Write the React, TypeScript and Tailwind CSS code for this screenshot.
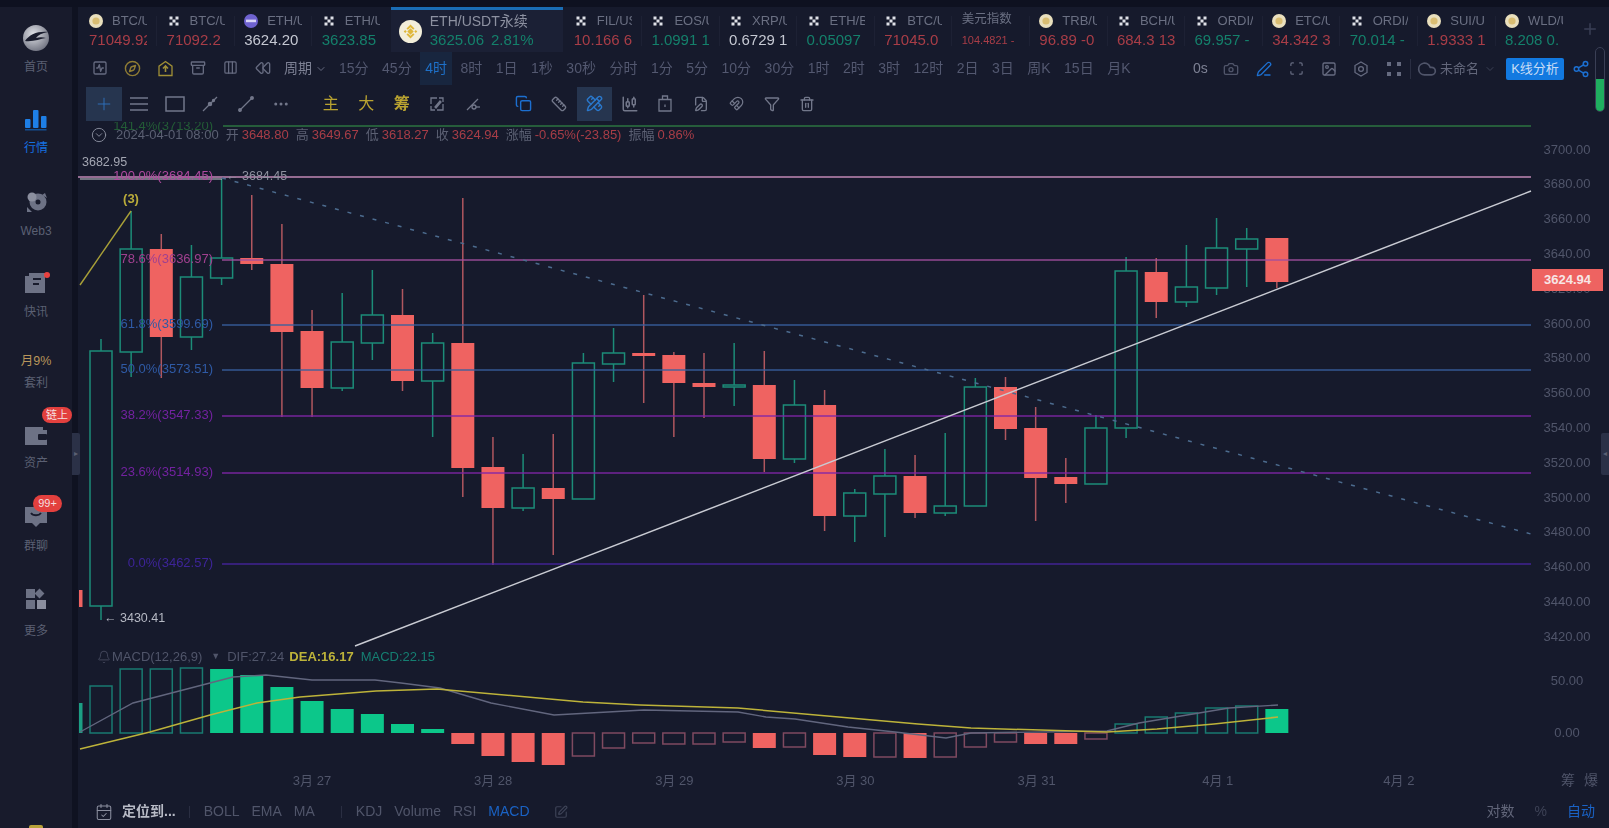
import {
  Archive,
  Camera,
  CandlestickChart,
  ChevronDown,
  CircleChevronDown,
  Cloud,
  Compass,
  Copy,
  Ellipsis,
  FilePen,
  Funnel,
  Magnet,
  PenLine,
  Ruler,
  Share2,
  SquareActivity,
  SquarePen,
  Trash2,
  Bell,
  CalendarCheck,
  Plus,
  Rewind,
  Columns3,
  Scan,
  Image,
  PencilRuler,
} from "lucide-react";

const RED = "#a83d47";
const GREEN = "#14806b";

// x = 101 + 30.15 * i, values are page y pixels: high, top, bottom, low
const candles: [number, number, number, number, "g" | "r"][] = [
  [339, 351, 606, 620, "g"],
  [211, 249, 352, 377, "g"],
  [234, 249, 337, 378, "r"],
  [245, 277, 337, 350, "g"],
  [179, 258, 278, 285, "g"],
  [195, 258, 264, 270, "r"],
  [224, 264, 332, 417, "r"],
  [310, 331, 388, 417, "r"],
  [293, 342, 388, 391, "g"],
  [270, 315, 343, 360, "g"],
  [289, 315, 381, 391, "r"],
  [333, 343, 381, 437, "g"],
  [198, 343, 468, 497, "r"],
  [437, 467, 508, 565, "r"],
  [454, 488, 508, 511, "g"],
  [434, 488, 499, 555, "r"],
  [353, 363, 499, 499, "g"],
  [328, 353, 364, 382, "g"],
  [295, 353, 356, 403, "r"],
  [352, 355, 383, 437, "r"],
  [353, 383, 387, 418, "r"],
  [343, 385, 387, 406, "g"],
  [351, 385, 459, 472, "r"],
  [380, 405, 459, 463, "g"],
  [390, 405, 516, 531, "r"],
  [489, 493, 516, 542, "g"],
  [449, 476, 494, 537, "g"],
  [455, 476, 513, 518, "r"],
  [433, 506, 513, 516, "g"],
  [378, 387, 506, 506, "g"],
  [377, 387, 429, 440, "r"],
  [407, 428, 478, 521, "r"],
  [458, 477, 484, 503, "r"],
  [415, 428, 484, 484, "g"],
  [257, 271, 428, 438, "g"],
  [258, 272, 302, 318, "r"],
  [245, 287, 302, 307, "g"],
  [218, 248, 288, 295, "g"],
  [228, 239, 249, 287, "g"],
  [238, 238, 282, 288, "r"],
];

// far end of each MACD bar from the zero line, and whether it is solid
const macd: [number, boolean][] = [
  [686, false], [669, false], [669, false], [668, false], [669, true], [675, true], [687, true],
  [701, true], [709, true], [714, true], [724, true], [729, true],
  [744, true], [756, true], [762, true], [765, true], [756, false], [748, false], [743, false],
  [744, false], [744, false], [742, false], [748, true], [747, false], [755, true], [757, true],
  [757, false], [758, true], [757, false], [747, false], [742, false], [744, true], [744, true],
  [739, false], [724, false], [717, false], [713, false], [708, false], [706, false], [709, true],
];

const fibs = [
  { label: "78.6%(3636.97)", y: 260, c: "#a24f9f", tc: "#a0408f" },
  { label: "61.8%(3599.69)", y: 325, c: "#38609f", tc: "#2f5aa5" },
  { label: "50.0%(3573.51)", y: 370, c: "#38609f", tc: "#2f5aa5" },
  { label: "38.2%(3547.33)", y: 416, c: "#8026a8", tc: "#7322a0" },
  { label: "23.6%(3514.93)", y: 473, c: "#8026a8", tc: "#7322a0" },
  { label: "0.0%(3462.57)", y: 564, c: "#47259f", tc: "#3d2498" },
];

const difLine =
  "80,732 133,703 210,683 233,677 266,675 312,680 375,680 401,683 440,688 491,703 554,715 644,710 738,712 766,717 795,719 848,727 895,732 946,738 971,733 1107,731 1139,723 1175,717 1229,708 1278,705";
const deaLine =
  "80,749 150,732 210,715 257,703 300,697 376,691 437,689 583,702 640,705 738,708 918,724 971,728 1107,732 1157,729 1214,724 1278,717";

const axisPrices = ["3700.00", "3680.00", "3660.00", "3640.00", "3620.00", "3600.00", "3580.00", "3560.00", "3540.00", "3520.00", "3500.00", "3480.00", "3460.00", "3440.00", "3420.00"];

const framesLeft = ["15分", "45分", "4时", "8时", "1日", "1秒", "30秒", "分时", "1分", "5分", "10分", "30分", "1时", "2时", "3时", "12时", "2日", "3日", "周K", "15日", "月K"];
const dates = ["3月 27", "3月 28", "3月 29", "3月 30", "3月 31", "4月 1", "4月 2"];

function OkxIcon() {
  return (
    <svg width="14" height="14" viewBox="0 0 14 14" className="shrink-0">
      <g fill="#dfe1e8">
        <rect x="2.5" y="2.5" width="3" height="3" />
        <rect x="8.5" y="2.5" width="3" height="3" />
        <rect x="5.5" y="5.5" width="3" height="3" />
        <rect x="2.5" y="8.5" width="3" height="3" />
        <rect x="8.5" y="8.5" width="3" height="3" />
      </g>
    </svg>
  );
}

function GoldIcon() {
  return (
    <svg width="14" height="14" viewBox="0 0 14 14" className="shrink-0">
      <circle cx="7" cy="7" r="7" fill="#e9dfbd" />
      <circle cx="7" cy="7" r="3.6" fill="#d9bd72" />
    </svg>
  );
}

function PurpleIcon() {
  return (
    <svg width="14" height="14" viewBox="0 0 14 14" className="shrink-0">
      <circle cx="7" cy="7" r="7" fill="#6e62cf" />
      <rect x="2" y="5.6" width="10" height="2.6" fill="#d8d5f5" />
    </svg>
  );
}

function BinanceIcon() {
  return (
    <svg width="23" height="23" viewBox="0 0 23 23" className="shrink-0">
      <circle cx="11.5" cy="11.5" r="11.5" fill="#f3eeda" />
      <g fill="#dfb73a">
        <rect x="9.2" y="9.2" width="4.6" height="4.6" transform="rotate(45 11.5 11.5)" />
        <path d="M11.5 4.5l4 4-1.4 1.3-2.6-2.6-2.6 2.6L7.5 8.5zM11.5 18.5l-4-4 1.4-1.3 2.6 2.6 2.6-2.6 1.4 1.3zM4.7 11.5l1.5-1.5 1.5 1.5L6.2 13zM18.3 11.5L16.8 13l-1.5-1.5 1.5-1.5z" />
      </g>
    </svg>
  );
}

function Tab({ icon, name, price, color }: { icon: "x" | "gold" | "purple"; name: string; price: string; color: string }) {
  return (
    <div className="w-[58px] shrink-0 overflow-hidden whitespace-nowrap">
      <div className="flex h-[18px] items-center gap-[9px] text-[13px] text-[#6a6f82]">
        {icon === "x" ? <OkxIcon /> : icon === "gold" ? <GoldIcon /> : <PurpleIcon />}
        <span>{name}</span>
      </div>
      <div className="h-[20px] text-[15px] leading-[20px]" style={{ color }}>
        {price}
      </div>
    </div>
  );
}

function TabSep() {
  return <div className="mx-[9.3px] mt-[4px] h-[30px] w-px shrink-0 bg-[#1d2134]" />;
}

function TopTabs() {
  return (
    <div className="flex h-[45px] shrink-0 items-start pl-[11px]">
      <div className="flex pt-[5px]">
        <Tab icon="gold" name="BTC/USDT" price="71049.92" color={RED} />
        <TabSep />
        <Tab icon="x" name="BTC/USDT" price="71092.2" color={RED} />
        <TabSep />
        <Tab icon="purple" name="ETH/USDT" price="3624.20" color="#c5c8d2" />
        <TabSep />
        <Tab icon="x" name="ETH/USDT" price="3623.85" color={GREEN} />
      </div>
      <div className="ml-[11px] flex h-[45px] w-[172px] shrink-0 items-center gap-[8px] border-t-[3px] border-[#1a6db5] bg-[#1b2035] pl-[8px]">
        <BinanceIcon />
        <div className="whitespace-nowrap">
          <div className="h-[18px] text-[14px] leading-[18px] text-[#8d91a1]">ETH/USDT永续</div>
          <div className="flex h-[20px] gap-[7px] text-[15px] leading-[20px] text-[#14806b]">
            <span>3625.06</span>
            <span>2.81%</span>
          </div>
        </div>
      </div>
      <div className="ml-[11px] flex pt-[5px]">
        <Tab icon="x" name="FIL/USDT" price="10.166 6" color={RED} />
        <TabSep />
        <Tab icon="x" name="EOS/USDT" price="1.0991 1" color={GREEN} />
        <TabSep />
        <Tab icon="x" name="XRP/USDT" price="0.6729 1" color="#c5c8d2" />
        <TabSep />
        <Tab icon="x" name="ETH/BTC" price="0.05097" color={GREEN} />
        <TabSep />
        <Tab icon="x" name="BTC/USD" price="71045.0" color={RED} />
        <TabSep />
        <div className="w-[58px] shrink-0 overflow-hidden whitespace-nowrap">
          <div className="h-[18px] text-[12.5px] leading-[14px] text-[#6a6f82]">美元指数</div>
          <div className="h-[20px] text-[11px] leading-[20px]" style={{ color: RED }}>
            104.4821 -
          </div>
        </div>
        <TabSep />
        <Tab icon="gold" name="TRB/USDT" price="96.89 -0" color={RED} />
        <TabSep />
        <Tab icon="x" name="BCH/USDT" price="684.3 13" color={RED} />
        <TabSep />
        <Tab icon="x" name="ORDI/USDT" price="69.957 -" color={GREEN} />
        <TabSep />
        <Tab icon="gold" name="ETC/USDT" price="34.342 3" color={RED} />
        <TabSep />
        <Tab icon="x" name="ORDI/USD" price="70.014 -" color={GREEN} />
        <TabSep />
        <Tab icon="gold" name="SUI/USDT" price="1.9333 1" color={RED} />
        <TabSep />
        <Tab icon="gold" name="WLD/USDT" price="8.208 0." color={GREEN} />
      </div>
      <Plus className="ml-[18px] mt-[13px] shrink-0 text-[#3a3f55]" size={18} />
    </div>
  );
}

function IconCell({ children }: { children: React.ReactNode }) {
  return <div className="flex w-[32.5px] shrink-0 justify-center">{children}</div>;
}

function PeriodBar() {
  const gray = "#666b80";
  return (
    <div className="flex h-[33px] shrink-0 items-center pl-[6px] text-[14px] text-[#535870]">
      <div className="flex w-[192px] shrink-0">
        <IconCell><SquareActivity size={16} color={gray} /></IconCell>
        <IconCell><Compass size={17} color="#8f7c34" /></IconCell>
        <IconCell>
          <svg width="17" height="17" viewBox="0 0 17 17" fill="none" stroke="#a08f36" strokeWidth="1.3">
            <path d="M8.5 1.5l6.5 4.6v9.4H2V6.1z" />
            <path d="M8.5 12V6M6 8.5l2.5-2.5 2.5 2.5" strokeWidth="1.6" />
          </svg>
        </IconCell>
        <IconCell><Archive size={16} color={gray} /></IconCell>
        <IconCell><Columns3 size={15} color={gray} /></IconCell>
        <IconCell><Rewind size={16} color={gray} /></IconCell>
      </div>
      <span className="ml-[8px] text-[#7d8194]">周期</span>
      <ChevronDown className="ml-[3px]" size={12} color={gray} />
      <div className="ml-[12px] flex items-center gap-[13.5px]">
        {framesLeft.map((f) =>
          f === "4时" ? (
            <span key={f} className="-mx-[5.5px] flex h-[33px] items-center bg-[#18263f] px-[5.5px] text-[#1e70c8]">
              {f}
            </span>
          ) : (
            <span key={f} className="whitespace-nowrap">
              {f}
            </span>
          ),
        )}
      </div>
      <div className="ml-auto flex items-center pr-[19px]">
        <span className="w-[29px] text-center text-[#7d8194]">0s</span>
        <IconCell><Camera size={16} color="#50556a" /></IconCell>
        <IconCell><PenLine size={16} color="#1c6fd0" /></IconCell>
        <IconCell><Scan size={15} color={gray} /></IconCell>
        <IconCell><Image size={16} color={gray} /></IconCell>
        <IconCell>
          <svg width="16" height="16" viewBox="0 0 16 16" fill="none" stroke={gray} strokeWidth="1.3">
            <path d="M8 1l6 3.5v7L8 15l-6-3.5v-7z" />
            <circle cx="8" cy="8" r="2.4" />
          </svg>
        </IconCell>
        <IconCell>
          <svg width="14" height="14" viewBox="0 0 14 14" fill={gray}>
            <rect x="0" y="0" width="4" height="4" />
            <rect x="10" y="0" width="4" height="4" />
            <rect x="0" y="10" width="4" height="4" />
            <rect x="10" y="10" width="4" height="4" />
          </svg>
        </IconCell>
        <div className="h-[20px] w-px bg-[#2a2e42]" />
        <Cloud className="ml-[6px]" size={20} color="#50556a" />
        <span className="ml-[3px] text-[13px] text-[#62667a]">未命名</span>
        <ChevronDown className="ml-[5px]" size={12} color="#3d4256" />
        <div className="ml-[10px] flex h-[22px] w-[58px] items-center justify-center rounded-[2px] bg-[#1279e0] text-[13px] text-[#c8dcf5]">
          K线分析
        </div>
        <Share2 className="ml-[8px]" size={18} color="#1c6fd0" />
      </div>
    </div>
  );
}

function Tool({ children, on }: { children: React.ReactNode; on?: boolean }) {
  return (
    <div className={on ? "flex h-[34px] w-[35.5px] shrink-0 items-center justify-center bg-[#26354f]" : "flex h-[34px] w-[35.5px] shrink-0 items-center justify-center"}>
      {children}
    </div>
  );
}

function DrawingBar() {
  const c = "#72778a";
  return (
    <div className="flex h-[37px] shrink-0 items-center pl-[8px]">
      <Tool on>
        <Plus size={20} strokeWidth={1} color="#2f77c8" />
      </Tool>
      <Tool>
        <svg width="20" height="16" viewBox="0 0 20 16" fill="none" stroke={c} strokeWidth="1.4">
          <path d="M1 2h18M1 8h18M1 14h18" />
        </svg>
      </Tool>
      <Tool>
        <svg width="20" height="16" viewBox="0 0 20 16" fill="none" stroke={c} strokeWidth="1.5">
          <rect x="1" y="1" width="18" height="14" />
        </svg>
      </Tool>
      <Tool>
        <svg width="16" height="16" viewBox="0 0 16 16" fill="none" stroke={c} strokeWidth="1.3">
          <path d="M1 15L15 1" />
          <circle cx="8" cy="8" r="1.6" fill={c} />
          <circle cx="11.5" cy="4.5" r="1" fill={c} />
        </svg>
      </Tool>
      <Tool>
        <svg width="16" height="16" viewBox="0 0 16 16" fill="none" stroke={c} strokeWidth="1.3">
          <path d="M2 14L14 2" />
          <circle cx="2" cy="14" r="1.3" fill={c} />
          <circle cx="14" cy="2" r="1.3" fill={c} />
        </svg>
      </Tool>
      <Tool>
        <Ellipsis size={18} color={c} />
      </Tool>
      <div className="ml-[14px] flex text-[16px] text-[#b9a331]">
        <Tool>主</Tool>
        <Tool>大</Tool>
        <Tool><span className="font-bold">筹</span></Tool>
      </div>
      <Tool>
        <svg width="18" height="18" viewBox="0 0 18 18" fill="none" stroke={c} strokeWidth="1.3">
          <path d="M3 5V3h12v12h-2M15 13v2H3V5" strokeDasharray="8 2" />
          <path d="M7 12l5-6 1 1-5 6z" />
        </svg>
      </Tool>
      <Tool>
        <svg width="16" height="16" viewBox="0 0 16 16" fill="none" stroke={c} strokeWidth="1.3">
          <path d="M2 14L13 3" />
          <circle cx="9" cy="11" r="2" />
          <path d="M11 11h4" />
        </svg>
      </Tool>
      <div className="ml-[15px] flex">
        <Tool><Copy size={17} color="#1c6fd0" /></Tool>
        <Tool><Ruler size={16} color={c} /></Tool>
        <Tool on><PencilRuler size={17} color="#2a78cc" /></Tool>
        <Tool><CandlestickChart size={18} color={c} /></Tool>
        <Tool>
          <svg width="14" height="17" viewBox="0 0 14 17" fill="none" stroke={c} strokeWidth="1.3">
            <path d="M1 4.5h12V16H1zM4.5 4.5V1h5v3.5" />
            <path d="M7 9.5v2.5" />
          </svg>
        </Tool>
        <Tool><FilePen size={16} color={c} /></Tool>
        <Tool><Magnet size={15} color={c} /></Tool>
        <Tool><Funnel size={16} color={c} /></Tool>
        <Tool><Trash2 size={16} color={c} /></Tool>
      </div>
    </div>
  );
}

function InfoBar() {
  return (
    <div className="absolute left-0 top-[4px] flex h-[18px] items-center whitespace-nowrap pl-[13px] text-[13px] text-[#5b6073]">
      <CircleChevronDown size={16} color="#8b8f9f" strokeWidth={1.4} />
      <span className="ml-[9px]">2024-04-01 08:00</span>
      <span className="ml-[7px]">开</span>
      <span className="ml-[3px] text-[#a83d47]">3648.80</span>
      <span className="ml-[7px]">高</span>
      <span className="ml-[3px] text-[#a83d47]">3649.67</span>
      <span className="ml-[7px]">低</span>
      <span className="ml-[3px] text-[#a83d47]">3618.27</span>
      <span className="ml-[7px]">收</span>
      <span className="ml-[3px] text-[#a83d47]">3624.94</span>
      <span className="ml-[7px]">涨幅</span>
      <span className="ml-[3px] text-[#a83d47]">-0.65%(-23.85)</span>
      <span className="ml-[7px]">振幅</span>
      <span className="ml-[3px] text-[#a83d47]">0.86%</span>
    </div>
  );
}

function ChartDrawing() {
  const cx = (i: number) => 101 + 30.15 * i;
  return (
    <svg className="absolute inset-0 h-full w-full" viewBox="78 122 1454 648" fontFamily="Liberation Sans, sans-serif">
      {/* top fib, mostly hidden under the info bar */}
      <line x1="223" x2="1531" y1="126" y2="126" stroke="#2c7440" strokeWidth="1.5" />
      <text x="213" y="130" textAnchor="end" fontSize="13" fill="#235c36">
        141.4%(3713.20)
      </text>

      {candles.map(([hi, top, bot, lo, kind], i) => {
        const x = cx(i);
        const red = kind === "r";
        const wick = red ? "#b0575f" : "#1c8c78";
        return (
          <g key={i}>
            <line x1={x} x2={x} y1={hi} y2={top} stroke={wick} strokeWidth="1.5" />
            <line x1={x} x2={x} y1={bot} y2={lo} stroke={wick} strokeWidth="1.5" />
            {red ? (
              <rect x={x - 11.5} y={top} width="23" height={Math.max(bot - top, 3)} fill="#ef6361" />
            ) : (
              <rect x={x - 11} y={top} width="22" height={bot - top} fill="none" stroke="#1c8c78" strokeWidth="1.5" />
            )}
          </g>
        );
      })}
      <rect x="79" y="590" width="3.5" height="17" fill="#ef6361" />

      <line x1="78" x2="1531" y1="177" y2="177" stroke="#c088b4" strokeWidth="1.5" />
      <line x1="80" x2="222" y1="179" y2="179" stroke="#c9cbd3" strokeWidth="1.2" />
      {fibs.map((f) => (
        <g key={f.label}>
          <line x1="222" x2="1531" y1={f.y} y2={f.y} stroke={f.c} strokeWidth="1.5" opacity="0.9" />
          <text x="213" y={f.y + 3} textAnchor="end" fontSize="13" fill={f.tc}>
            {f.label}
          </text>
        </g>
      ))}
      <text x="213" y="180" textAnchor="end" fontSize="13" fill="#b04aa0">
        100.0%(3684.45)
      </text>

      <line x1="222" y1="178" x2="1531" y2="534" stroke="#4c6b8e" strokeWidth="1.5" strokeDasharray="4 9" />
      <line x1="355" y1="646" x2="1531" y2="191" stroke="#c9cbd3" strokeWidth="1.5" />
      <line x1="80" y1="285" x2="131" y2="211" stroke="#a8a038" strokeWidth="1.4" />

      <text x="131" y="203" textAnchor="middle" fontSize="13" fontWeight="bold" fill="#b9ab3a">
        (3)
      </text>
      <text x="82" y="166" fontSize="12.5" fill="#a3a6b2">
        3682.95
      </text>
      <text x="226" y="180" fontSize="12.5" fill="#8f92a0">
        ← 3684.45
      </text>
      <text x="104" y="622" fontSize="12.5" fill="#b6b9c4">
        ← 3430.41
      </text>

      {/* MACD pane */}
      <rect x="79" y="703" width="3.5" height="30" fill="#1c9f84" />
      {macd.map(([end, solid], i) => {
        const x = cx(i);
        const up = end < 733;
        const top = up ? end : 733;
        const h = Math.abs(end - 733);
        if (solid) {
          return <rect key={i} x={x - 11.5} y={top} width="23" height={h} fill={up ? "#0cc78a" : "#ef6361"} />;
        }
        return (
          <rect key={i} x={x - 11} y={top} width="22" height={h} fill="none" stroke={up ? "#197a70" : "#7f4a60"} strokeWidth="1.5" />
        );
      })}
      <polyline points={difLine} fill="none" stroke="#62667e" strokeWidth="1.4" />
      <polyline points={deaLine} fill="none" stroke="#bdb33a" strokeWidth="1.5" />
    </svg>
  );
}

function Chart() {
  return (
    <div className="flex h-[648px] shrink-0">
      <div className="relative w-[1454px] shrink-0 overflow-hidden">
        <ChartDrawing />
        <InfoBar />
        <div className="absolute left-[19px] top-[525px] flex items-center whitespace-nowrap text-[13px] text-[#50556a]">
          <Bell size={14} strokeWidth={1.3} />
          <span className="ml-[1px]">MACD(12,26,9)</span>
          <span className="ml-[9px] text-[9px]">▼</span>
          <span className="ml-[7px]">DIF:27.24</span>
          <span className="ml-[5px] font-bold text-[#bdb33a]">DEA:16.17</span>
          <span className="ml-[7px] text-[#157f72]">MACD:22.15</span>
        </div>
      </div>
      <div className="relative flex-1 pr-[7px] pt-[10.6px] text-center text-[13px] text-[#50556a]">
        {axisPrices.map((p) => (
          <div key={p} className="h-[34.8px] leading-[34.8px]">
            {p}
          </div>
        ))}
        <div className="mt-[16px] h-[20px] leading-[20px]">50.00</div>
        <div className="mt-[32px] h-[20px] leading-[20px]">0.00</div>
        <div className="absolute left-0 top-[147px] flex h-[22px] w-[71px] items-center justify-center bg-[#ee6361] text-[13px] font-bold text-[#f7e6e6]">
          3624.94
        </div>
      </div>
    </div>
  );
}

function TimeAxis() {
  return (
    <div className="flex h-[25px] shrink-0 items-center pb-[4px] pl-[143.4px] text-[13px] text-[#50556a]">
      {dates.map((d) => (
        <div key={d} className="w-[181.17px] shrink-0 text-center">
          {d}
        </div>
      ))}
      <div className="ml-auto flex gap-[9px] pr-[11px] text-[14px] text-[#50556a]">
        <span>筹</span>
        <span>爆</span>
      </div>
    </div>
  );
}

function BottomBar() {
  return (
    <div className="flex h-[33px] shrink-0 items-center pl-[17px] text-[14px] text-[#50556a]">
      <CalendarCheck size={18} color="#8b8f9f" strokeWidth={1.4} />
      <span className="ml-[9px] font-bold text-[#b8bbc6]">定位到...</span>
      <div className="ml-[13px] h-[12px] w-px bg-[#2a2e42]" />
      <div className="ml-[14px] flex gap-[12px]">
        <span>BOLL</span>
        <span>EMA</span>
        <span>MA</span>
      </div>
      <div className="ml-[26px] h-[12px] w-px bg-[#2a2e42]" />
      <div className="ml-[14px] flex gap-[12px]">
        <span>KDJ</span>
        <span>Volume</span>
        <span>RSI</span>
        <span className="text-[#1a62c4]">MACD</span>
      </div>
      <SquarePen className="ml-[24px]" size={14} color="#3d4256" />
      <div className="ml-auto flex gap-[20px] pr-[14px]">
        <span className="text-[#62667a]">对数</span>
        <span className="text-[#3d4256]">%</span>
        <span className="text-[#1a62c4]">自动</span>
      </div>
    </div>
  );
}

function SideItem({ icon, label, className, children }: { icon: React.ReactNode; label: React.ReactNode; className: string; children?: React.ReactNode }) {
  return (
    <div className={`relative flex w-full flex-col items-center ${className}`}>
      <div className="flex h-[36px] items-center justify-center">{icon}</div>
      {label}
      {children}
    </div>
  );
}

function Sidebar() {
  const g = "#6d7285";
  const lbl = "mt-[2px] text-[12px] leading-[18px] text-[#5b6073]";
  return (
    <aside className="relative flex h-full w-[72px] shrink-0 flex-col items-center bg-[#181b2c]">
      <SideItem
        className="mt-[13px]"
        label={<span className="mt-[2px] text-[12px] leading-[18px] text-[#5b6073]">首页</span>}
        icon={
          <svg width="28" height="28" viewBox="0 0 28 28">
            <defs>
              <radialGradient id="ball" cx="40%" cy="35%" r="70%">
                <stop offset="0%" stopColor="#dfe1e6" />
                <stop offset="100%" stopColor="#6f7280" />
              </radialGradient>
            </defs>
            <circle cx="14" cy="14" r="13" fill="url(#ball)" />
            <path d="M3 17C8 10 16 7 26 8c-6 1-10 3-12 6 3-1 7-1 10 0-6 1-13 4-21 3z" fill="#1a1d2e" />
          </svg>
        }
      />
      <SideItem
        className="mt-[25px]"
        label={<span className="mt-[2px] text-[12px] leading-[18px] text-[#1670e0]">行情</span>}
        icon={
          <svg width="24" height="24" viewBox="0 0 24 24" fill="#1e7fe6">
            <rect x="1" y="12" width="5.5" height="9" rx="1" />
            <rect x="9" y="3" width="5.5" height="18" rx="1" />
            <rect x="17" y="9" width="5.5" height="12" rx="1" />
            <rect x="1" y="22" width="21.5" height="1.5" fill="#124f92" />
          </svg>
        }
      />
      <SideItem
        className="mt-[27px]"
        label={<span className={lbl}>Web3</span>}
        icon={
          <svg width="26" height="26" viewBox="0 0 26 26" fill={g}>
            <circle cx="15" cy="13" r="8.5" />
            <circle cx="9" cy="8" r="4.5" fill="#8b8f9f" />
            <path d="M4 18l5 5H4zM22 4l2 5-5-3z" />
            <circle cx="15" cy="13" r="2.5" fill="#181b2c" />
          </svg>
        }
      />
      <SideItem
        className="mt-[25px]"
        label={<span className={lbl}>快讯</span>}
        icon={
          <svg width="24" height="24" viewBox="0 0 24 24" fill={g}>
            <path d="M1 5h4v17H1zM5 2h16v20H5z" />
            <path d="M9 7h8v2H9zM9 12h6v2H9z" fill="#181b2c" />
          </svg>
        }
      >
        <span className="absolute left-[44px] top-[7px] size-[6px] rounded-full bg-[#e8413f]" />
      </SideItem>
      <div className="mt-[31px] flex flex-col items-center">
        <span className="text-[12.5px] leading-[18px] text-[#b8955a]">月9%</span>
        <span className="mt-[4px] text-[12px] leading-[18px] text-[#5b6073]">套利</span>
      </div>
      <SideItem
        className="mt-[25px]"
        label={<span className="mt-[1px] text-[12px] leading-[18px] text-[#5b6073]">资产</span>}
        icon={
          <svg width="24" height="22" viewBox="0 0 24 22" fill={g}>
            <path d="M1 3h18v3h4v15H1z" />
            <rect x="14" y="10" width="9" height="6" rx="1" fill="#181b2c" />
          </svg>
        }
      >
        <span className="absolute left-[42px] top-[-10px] flex h-[16px] w-[30px] items-center justify-center rounded-full bg-[#e3403e] text-[11px] text-[#f5dede]">
          链上
        </span>
      </SideItem>
      <SideItem
        className="mt-[27px]"
        label={<span className={lbl}>群聊</span>}
        icon={
          <svg width="24" height="24" viewBox="0 0 24 24" fill={g}>
            <path d="M1 2h22v16h-7l-4 4-4-4H1z" />
            <path d="M7 8c2 3 8 3 10 0" fill="none" stroke="#181b2c" strokeWidth="1.8" />
          </svg>
        }
      >
        <span className="absolute left-[33px] top-[-4px] flex h-[17px] w-[29px] items-center justify-center rounded-full bg-[#e3403e] text-[11px] text-[#f5dede]">
          99+
        </span>
      </SideItem>
      <SideItem
        className="mt-[26px]"
        label={<span className="mt-[5px] text-[12px] leading-[18px] text-[#5b6073]">更多</span>}
        icon={
          <svg width="24" height="24" viewBox="0 0 24 24" fill={g}>
            <rect x="2" y="2" width="9" height="9" />
            <rect x="12" y="3" width="7" height="7" transform="rotate(45 15.5 6.5)" />
            <rect x="2" y="13" width="9" height="9" />
            <rect x="13" y="13" width="9" height="9" fill="#8b8f9f" />
          </svg>
        }
      />
      <span className="absolute bottom-0 left-[29px] h-[3px] w-[14px] rounded-t-[2px] bg-[#b8a23a]" />
    </aside>
  );
}

export default function App() {
  return (
    <div className="h-[828px] w-[1609px] overflow-hidden bg-[#161a2c]">
      <div className="relative h-full w-full blur-[0.6px] font-['Liberation_Sans','Noto_Sans_CJK_SC',sans-serif]">
        <div className="h-[7px] bg-[#0e1120]" />
        <div className="flex h-[821px]">
          <Sidebar />
          <div className="w-[6px] shrink-0 bg-[#0f1221]" />
          <div className="flex min-w-0 flex-1 flex-col">
            <TopTabs />
            <PeriodBar />
            <DrawingBar />
            <Chart />
            <TimeAxis />
            <BottomBar />
          </div>
        </div>

        {/* collapse handles and the green level bar lie over the page */}
        <div className="absolute left-[72px] top-[433px] flex h-[42px] w-[8px] items-center justify-center rounded-r-[2px] bg-[#2b3147] text-[8px] text-[#5b6073]">
          ▸
        </div>
        <div className="absolute right-0 top-[433px] flex h-[42px] w-[8px] items-center justify-center rounded-l-[2px] bg-[#2b3147] text-[8px] text-[#5b6073]">
          ◂
        </div>
        <div className="absolute left-[1595px] top-[47px] h-[65px] w-[10px] overflow-hidden rounded-full border border-[#3a3f55]">
          <div className="mt-[31px] h-[33px] bg-[#1fae5f]" />
        </div>
      </div>
    </div>
  );
}
